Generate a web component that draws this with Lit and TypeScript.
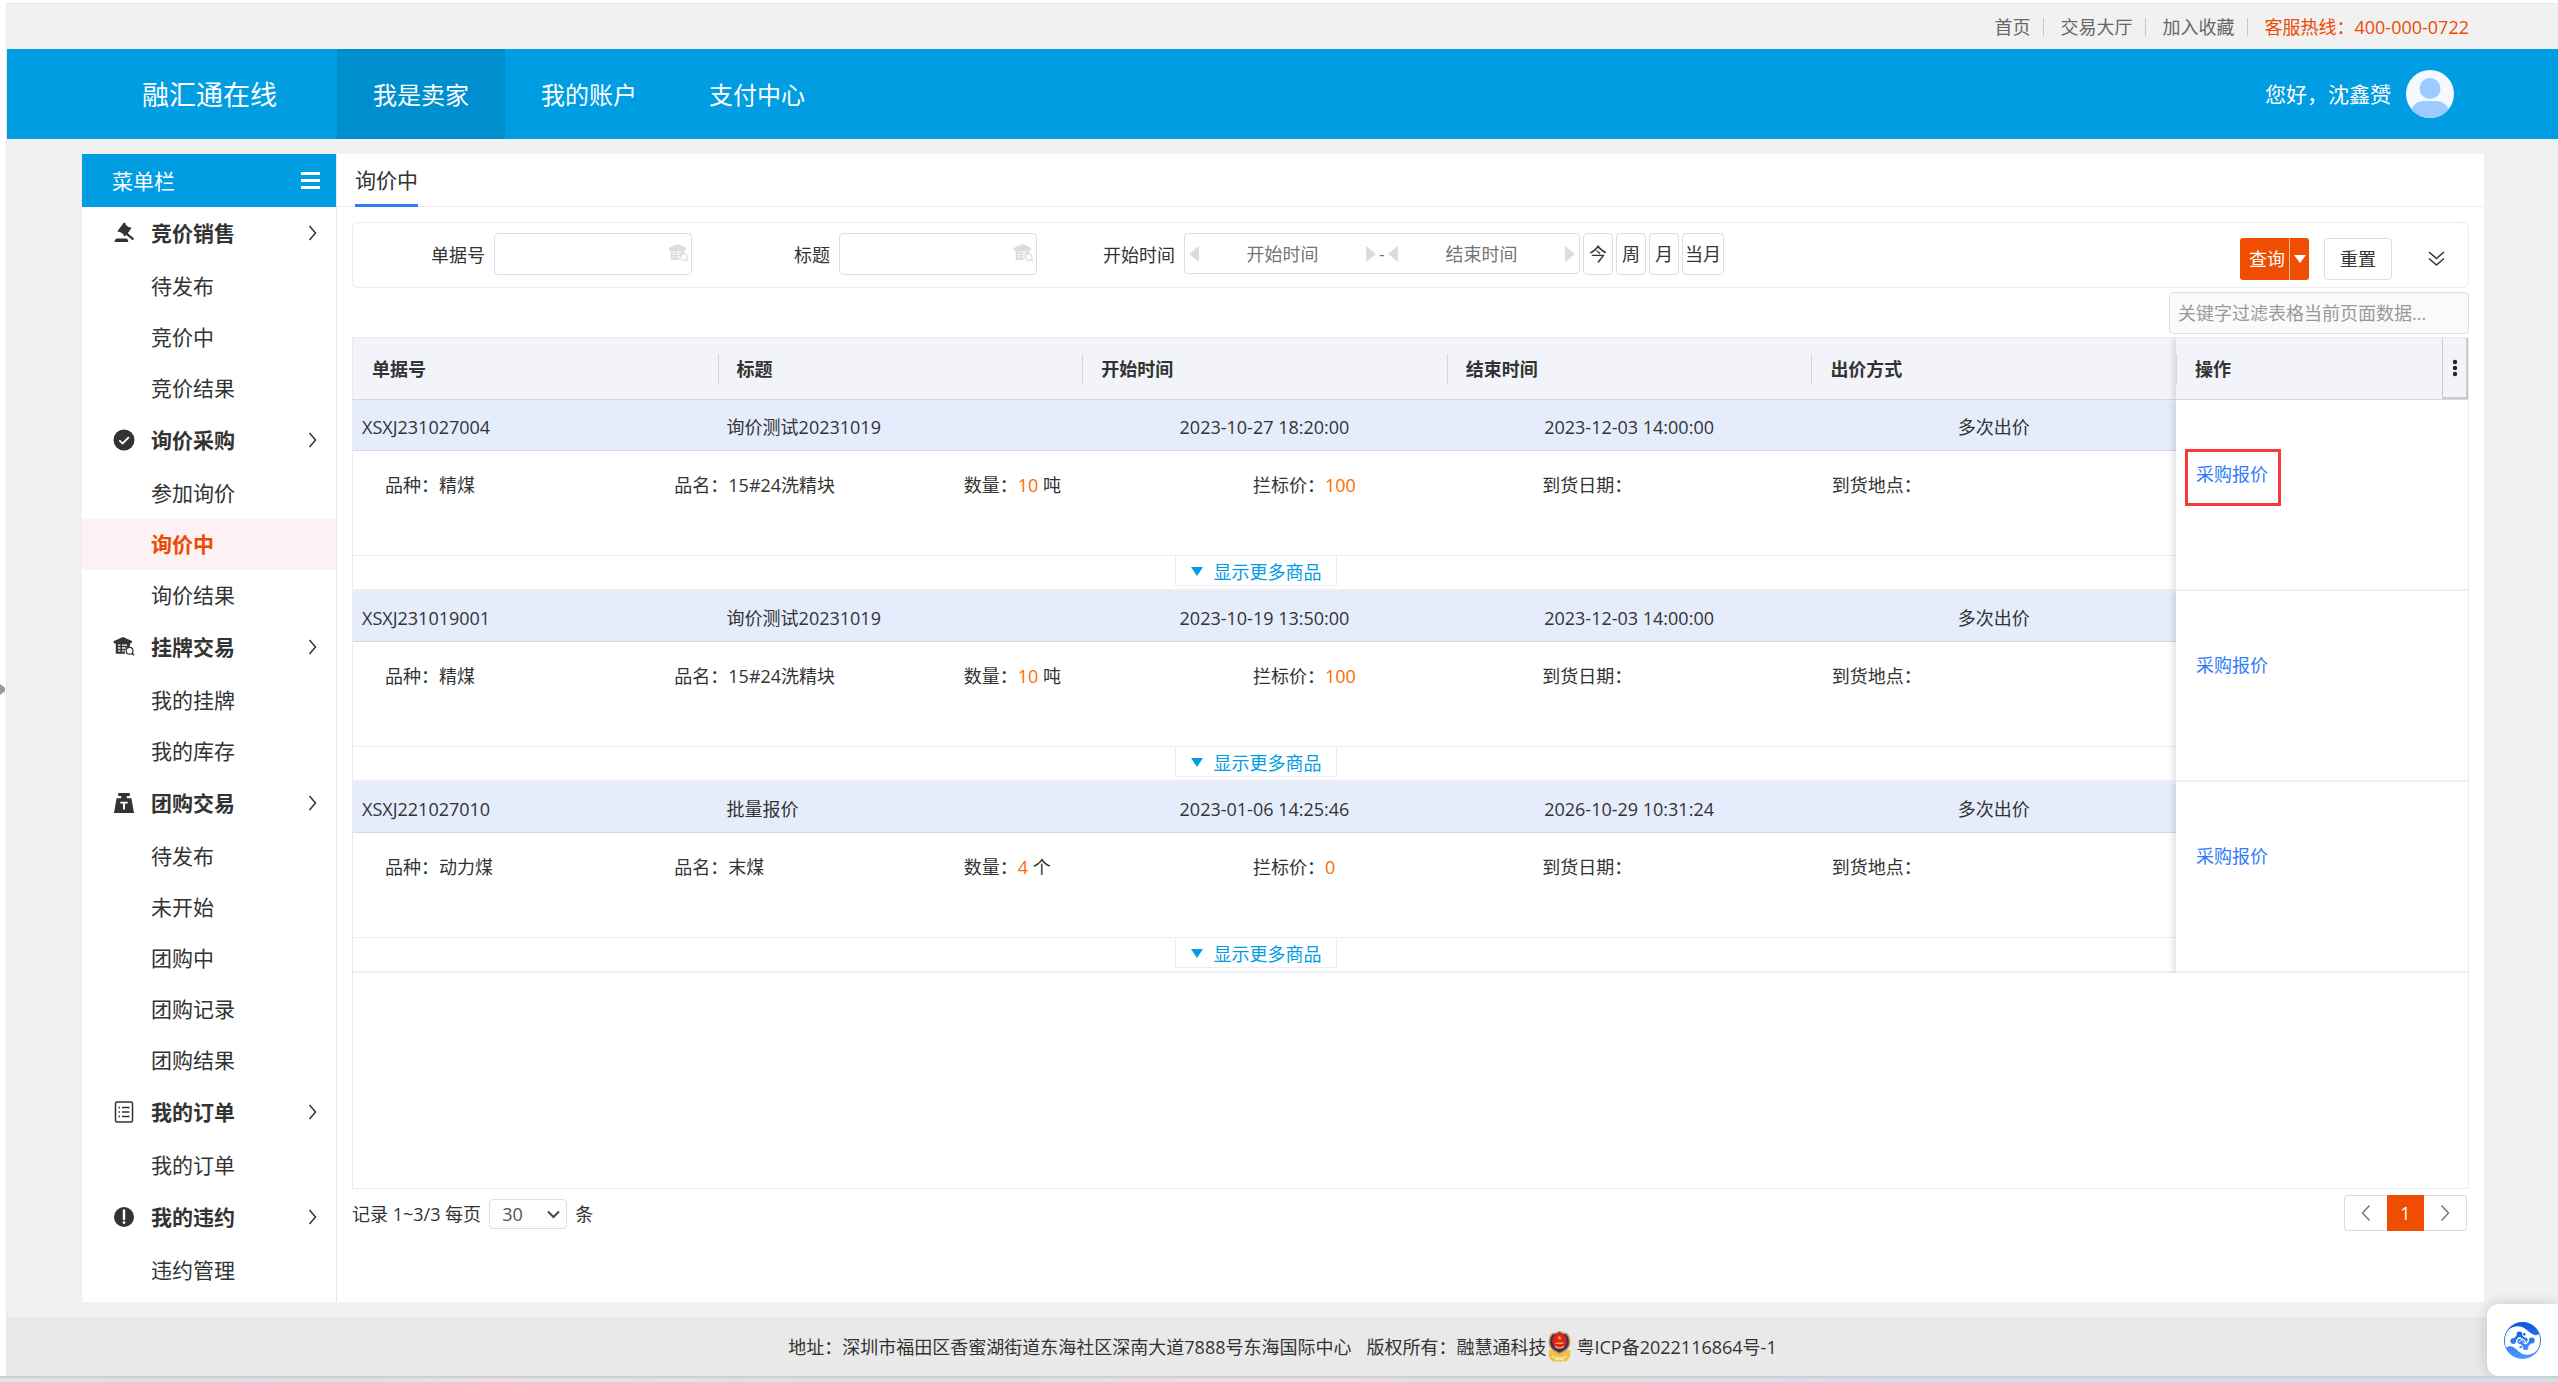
import { LitElement, html, svg, css, TemplateResult } from "lit";
import { customElement, property } from "lit/decorators.js";
import { classMap } from "lit/directives/class-map.js";

interface MenuGroup {
  icon: string;
  name: string;
  items: string[];
}

interface Order {
  no: string;
  title: string;
  start: string;
  end: string;
  mode: string;
  kind: string;
  product: string;
  qty: string;
  unit: string;
  limit: string;
  marked?: boolean;
}

const MENU: MenuGroup[] = [
  { icon: "gavel", name: "竞价销售", items: ["待发布", "竞价中", "竞价结果"] },
  { icon: "check", name: "询价采购", items: ["参加询价", "询价中", "询价结果"] },
  { icon: "house", name: "挂牌交易", items: ["我的挂牌", "我的库存"] },
  { icon: "weight", name: "团购交易", items: ["待发布", "未开始", "团购中", "团购记录", "团购结果"] },
  { icon: "list", name: "我的订单", items: ["我的订单"] },
  { icon: "alert", name: "我的违约", items: ["违约管理"] },
];

const ACTIVE_ITEM = "询价中";

const ORDERS: Order[] = [
  { no: "XSXJ231027004", title: "询价测试20231019", start: "2023-10-27 18:20:00", end: "2023-12-03 14:00:00", mode: "多次出价", kind: "精煤", product: "15#24洗精块", qty: "10", unit: "吨", limit: "100", marked: true },
  { no: "XSXJ231019001", title: "询价测试20231019", start: "2023-10-19 13:50:00", end: "2023-12-03 14:00:00", mode: "多次出价", kind: "精煤", product: "15#24洗精块", qty: "10", unit: "吨", limit: "100" },
  { no: "XSXJ221027010", title: "批量报价", start: "2023-01-06 14:25:46", end: "2026-10-29 10:31:24", mode: "多次出价", kind: "动力煤", product: "末煤", qty: "4", unit: "个", limit: "0" },
];

const ICONS: Record<string, TemplateResult> = {
  gavel: svg`<g fill="currentColor"><path d="m11 .5 2 1.200-.3 1.300 3.600 2.400 1.100-.4 1 1-3.600 5.300 5.700 4.700c1 1-.3 2.500-1.500 1.700l-5.600-4.600-1.700 1.100-1.200-.6.2-1.200-4-2.600-1.200.3-1-1z"/><path d="M4 16.400h9c1.300 0 2.200 1.300 2.300 3.600H1.500c.2-2.300 1.200-3.600 2.500-3.600z"/></g>`,
  check: svg`<circle cx="11" cy="11" r="10.500" fill="currentColor"/><path d="m6.300 11.300 3.300 3.200 6.300-6.300" fill="none" stroke="#fff" stroke-width="1.800"/>`,
  house: svg`<path d="M10 1 19.500 5.200 18 7.500H17v3.300a5 5 0 0 0-4.800 7H2.800V7.500H1L.5 5.200z" fill="currentColor"/><path d="M5 9.200h2.400M9 9.200h5M5 12h2.400M9 12h3.500M5 14.800h2.400M9 14.800h2.500" stroke="#fff" stroke-width="1.300"/><circle cx="16.600" cy="14.800" r="3.400" fill="none" stroke="currentColor" stroke-width="1.200"/><path d="m19 17.200 2 2" stroke="currentColor" stroke-width="1.600"/>`,
  weight: svg`<path d="M5.200 1h11.600v3h-3v2.200h4.600L21 21H1L3.600 6.200h4.600V4h-3z" fill="currentColor"/><path d="M7.300 10.600h7.400M11 10.600v7" stroke="#fff" stroke-width="1.900" fill="none"/>`,
  list: svg`<rect x="2.500" y="1" width="17" height="20" rx="1.500" fill="none" stroke="currentColor" stroke-width="1.500"/><path d="M5.500 6.500H7m2 0h7.500M5.500 11H7m2 0h7.500M5.500 15.500H7m2 0h7.500" stroke="currentColor" stroke-width="1.400"/>`,
  alert: svg`<circle cx="11" cy="11" r="10" fill="currentColor"/><path d="M11 4.500v8.500" stroke="#fff" stroke-width="2.400" stroke-linecap="round"/><circle cx="11" cy="16.600" r="1.400" fill="#fff"/>`,
};

const icon = (name: string, cls: string) =>
  html`<svg class=${cls} viewBox="0 0 22 22" aria-hidden="true">${ICONS[name]}</svg>`;

const base = css`
  *, *::before, *::after { box-sizing: border-box; }
  button, input, select { font: inherit; color: inherit; margin: 0; }
  button { cursor: pointer; }
  a { text-decoration: none; color: inherit; }
  svg { display: block; flex: none; }
`;

@customElement("side-menu")
export class SideMenu extends LitElement {
  @property() active = ACTIVE_ITEM;

  static styles = [base, css`
    :host { display: block; width: 255px; flex: none; background: #fff; border-right: 1px solid #e6e6ea; padding-bottom: 6px; }
    .head { display: flex; align-items: center; justify-content: space-between; height: 53px; padding: 0 16px 0 30px; background: #009de2; color: #fff; font-size: 21px; }
    .burger { display: grid; gap: 4px; padding: 0; border: 0; background: none; }
    .burger i { display: block; width: 19px; height: 3px; background: #fff; }
    .group { display: flex; align-items: center; width: 100%; height: 54px; padding: 0 18px 2px 31px; border: 0; background: none; font-size: 21px; font-weight: 700; text-align: left; }
    .name { flex: 1; }
    .ico { width: 22px; height: 22px; margin-right: 16px; }
    .arrow { width: 10px; height: 16px; }
    .item { display: flex; align-items: center; height: 51px; padding: 0 0 2px 69px; font-size: 21px; }
    .active { background: #fdf1f3; color: #ec4b03; font-weight: 700; }
  `];

  render() {
    return html`
      <div class="head">
        <span>菜单栏</span>
        <button class="burger" aria-label="折叠菜单"><i></i><i></i><i></i></button>
      </div>
      <nav>
        ${MENU.map((g) => html`
          <button class="group">
            ${icon(g.icon, "ico")}
            <span class="name">${g.name}</span>
            <svg class="arrow" viewBox="0 0 10 16"><path d="m1.500 1 6 7-6 7" fill="none" stroke="#333" stroke-width="1.500"/></svg>
          </button>
          ${g.items.map((i) => html`<a href="#" class=${classMap({ item: true, active: i === this.active })}>${i}</a>`)}
        `)}
      </nav>
    `;
  }
}

@customElement("query-bar")
export class QueryBar extends LitElement {
  static styles = [base, css`
    :host { display: block; font-size: 18px; }
    .bar { display: flex; align-items: flex-start; height: 66px; padding: 10px 23px 0 0; border: 1px solid #ececf0; border-radius: 6px; }
    .lab { width: 147px; padding-right: 9px; line-height: 44px; text-align: right; }
    .lab:first-child { width: 141px; }
    .field { position: relative; width: 198px; }
    .box { width: 100%; height: 42px; padding: 0 30px 0 8px; border: 1px solid #d9dde6; border-radius: 4px; background: #fff; }
    .pick { position: absolute; top: 10px; right: 3px; width: 21px; height: 21px; color: #dcdcdc; }
    .range { display: flex; align-items: center; width: 396px; height: 41px; padding: 0 4px; border: 1px solid #d9dde6; border-radius: 4px; color: #757575; }
    .date { flex: 1; min-width: 0; width: 0; height: 36px; padding: 0; border: 0; background: none; text-align: center; }
    .date::placeholder { color: #757575; opacity: 1; }
    .tri { width: 10px; height: 16px; fill: #dcdcdc; }
    .dash { width: 12px; text-align: center; }
    .quick { height: 42px; margin-left: 3px; padding: 0 5px; border: 1px solid #d9dde6; border-radius: 4px; background: #fff; }
    .quick:nth-last-child(2) { padding: 0 2px; }
    .acts { display: flex; align-items: center; margin: 5px 0 0 auto; }
    .go { height: 42px; padding: 0 4px 0 9px; border: 0; border-radius: 3px 0 0 3px; background: #ee4d02; color: #fff; }
    .drop { display: grid; place-items: center; width: 20px; height: 42px; padding: 0; border: 0; border-left: 1px solid #f8b795; border-radius: 0 3px 3px 0; background: #ee4d02; }
    .down { width: 12px; height: 8px; fill: #fff; }
    .reset { height: 42px; margin-left: 15px; padding: 0 15px; border: 1px solid #d9dde6; border-radius: 4px; background: #fff; }
    .more { margin-left: 36px; padding: 0; border: 0; background: none; }
    .chev { width: 17px; height: 16px; }
  `];

  render() {
    const left = html`<svg class="tri" viewBox="0 0 10 16"><path d="M10 0v16L0 8z"/></svg>`;
    const right = html`<svg class="tri" viewBox="0 0 10 16"><path d="M0 0v16l10-8z"/></svg>`;
    return html`
      <form class="bar">
        <label class="lab" for="no">单据号</label>
        <div class="field"><input class="box" id="no">${icon("house", "pick")}</div>
        <label class="lab" for="title">标题</label>
        <div class="field"><input class="box" id="title">${icon("house", "pick")}</div>
        <label class="lab" for="from">开始时间</label>
        <div class="range">
          ${left}<input class="date" id="from" placeholder="开始时间">${right}
          <span class="dash">-</span>
          ${left}<input class="date" aria-label="结束时间" placeholder="结束时间">${right}
        </div>
        ${["今", "周", "月", "当月"].map((t) => html`<button type="button" class="quick">${t}</button>`)}
        <div class="acts">
          <button type="button" class="go">查询</button>
          <button type="button" class="drop" aria-label="更多查询"><svg class="down" viewBox="0 0 12 8"><path d="M0 0h12L6 8z"/></svg></button>
          <button type="button" class="reset">重置</button>
          <button type="button" class="more" aria-label="展开"><svg class="chev" viewBox="0 0 17 16"><path d="m1 1 7.500 6.500L16 1M1 7.500 8.500 14 16 7.500" fill="none" stroke="#333" stroke-width="1.500"/></svg></button>
        </div>
      </form>
    `;
  }
}

@customElement("order-table")
export class OrderTable extends LitElement {
  @property({ attribute: false }) orders: Order[] = ORDERS;

  static styles = [base, css`
    :host { display: block; border: 1px solid #ebebef; font-size: 18px; }
    table { width: 100%; table-layout: fixed; border-collapse: separate; border-spacing: 0; }
    .op { width: 292px; }
    th { height: 62px; padding: 0; border-bottom: 1px solid #d6d9e2; background: #f2f4f9; text-align: left; font-weight: 700; }
    .hd { display: flex; align-items: center; height: 30px; padding-left: 18px; border-left: 1px solid #d3d5db; }
    .hd.first { border-left-color: transparent; }
    .ophead { position: relative; box-shadow: -3px 0 6px rgba(0, 0, 0, .12); clip-path: inset(0 0 0 -10px); }
    .kebab { position: absolute; top: 0; right: 0; display: grid; place-items: center; width: 26px; height: 61px; padding: 0; border: 1px solid #c9cbd1; border-width: 0 2px 2px 1px; background: #f2f4f9; }
    .dots { width: 6px; height: 18px; fill: #222; }
    .band td { height: 51px; padding: 4px 9px 0; background: #e5edfc; border-bottom: 1px solid #d6d9e2; }
    .band .mid { text-align: center; }
    .band .act { position: relative; padding: 62px 20px 0; background: #fff; vertical-align: top; border-bottom: 2px solid #f0f1f6; box-shadow: -3px 0 6px rgba(0, 0, 0, .12); clip-path: inset(0 0 0 -10px); }
    .link { color: #2f7cf6; }
    .mark { position: absolute; top: 49px; left: 9px; width: 96px; height: 57px; border: 3px solid #fb3838; pointer-events: none; }
    .detail { height: 104px; padding: 22px 0 0 32px; vertical-align: top; }
    .specs { display: grid; grid-template-columns: repeat(6, 1fr); margin-right: 55px; }
    .hot { color: #ff6a00; }
    .foot { height: 36px; padding: 0 18px 0 0; border-top: 1px solid #ededf3; border-bottom: 2px solid #ededf3; vertical-align: top; }
    .more { display: flex; align-items: center; gap: 11px; width: 162px; height: 30px; margin: 0 auto; padding: 2px 0 0 15px; border: 1px solid #ededf3; border-top: 0; background: #fff; color: #009de2; }
    .down { width: 12px; height: 9px; fill: #009de2; }
  `];

  render() {
    return html`
      <table>
        <colgroup><col><col><col><col><col><col class="op"></colgroup>
        <thead>
          <tr>
            ${["单据号", "标题", "开始时间", "结束时间", "出价方式"].map((t, i) => html`<th><div class=${classMap({ hd: true, first: i === 0 })}>${t}</div></th>`)}
            <th class="ophead">
              <div class="hd">操作</div>
              <button class="kebab" aria-label="列设置"><svg class="dots" viewBox="0 0 6 18"><circle cx="3" cy="3" r="2.200"/><circle cx="3" cy="9" r="2.200"/><circle cx="3" cy="15" r="2.200"/></svg></button>
            </th>
          </tr>
        </thead>
        <tbody>
          ${this.orders.map((o) => html`
            <tr class="band">
              <td>${o.no}</td>
              <td>${o.title}</td>
              <td class="mid">${o.start}</td>
              <td class="mid">${o.end}</td>
              <td class="mid">${o.mode}</td>
              <td class="act" rowspan="3">
                <a class="link" href="#">采购报价</a>
                ${o.marked ? html`<span class="mark"></span>` : ""}
              </td>
            </tr>
            <tr>
              <td class="detail" colspan="5">
                <div class="specs">
                  <span>品种：${o.kind}</span>
                  <span>品名：${o.product}</span>
                  <span>数量：<span class="hot">${o.qty}</span> ${o.unit}</span>
                  <span>拦标价：<span class="hot">${o.limit}</span></span>
                  <span>到货日期：</span>
                  <span>到货地点：</span>
                </div>
              </td>
            </tr>
            <tr>
              <td class="foot" colspan="5">
                <button class="more"><svg class="down" viewBox="0 0 12 9"><path d="M0 0h12L6 9z"/></svg>显示更多商品</button>
              </td>
            </tr>
          `)}
        </tbody>
      </table>
    `;
  }
}

@customElement("app-root")
export class AppRoot extends LitElement {
  static styles = [base, css`
    :host { position: relative; display: flex; flex-direction: column; min-height: 100vh; background: #fff; color: #333; font: 18px/24px "Open Sans", "Noto Sans CJK SC", sans-serif; }
    .page { flex: 1; display: flex; flex-direction: column; margin: 3px 0 0 6px; border: 1px solid #e6e6e6; border-width: 1px 0 0 1px; background: #f1f1f1; }
    .top { display: flex; justify-content: flex-end; align-items: center; height: 45px; padding-right: 89px; color: #666; }
    .top a + a { margin-left: 13px; padding-left: 17px; position: relative; }
    .top a + a::before { content: ""; position: absolute; left: 0; top: 3px; width: 1px; height: 18px; background: #c4c6cc; }
    .top .hotline { color: #ec4b03; }
    .bar { display: flex; height: 90px; padding-right: 104px; background: #009de2; color: #fff; }
    .brand { display: flex; align-items: center; width: 330px; padding: 2px 0 0 135px; font-size: 27px; }
    .nav { display: flex; flex: 1; }
    .nav a { display: flex; align-items: center; padding: 2px 36px 0; font-size: 24px; }
    .nav .on { background: #008fce; }
    .user { display: flex; align-items: center; gap: 15px; font-size: 21px; }
    .avatar { width: 48px; height: 48px; }
    .body { flex: 1; display: flex; margin: 15px 74px 15px 75px; }
    .main { flex: 1; min-width: 0; display: flex; flex-direction: column; background: #fff; }
    .tabs { height: 53px; padding: 0 18px; border-bottom: 1px solid #ececf0; font-size: 21px; }
    .tab { display: inline-block; height: 53px; padding-top: 14px; border-bottom: 3px solid #2f7af6; }
    .inner { flex: 1; display: flex; flex-direction: column; padding: 15px 15px 0; }
    .filter { align-self: flex-end; width: 300px; height: 42px; margin: 4px 0 3px; padding: 0 8px; border: 1px solid #d9dde6; border-radius: 4px; background: #fafafa; }
    .filter::placeholder { color: #999; opacity: 1; }
    .table { flex: 1; }
    .pager { display: flex; justify-content: space-between; align-items: flex-start; height: 113px; padding: 6px 2px 0 0; }
    .size { display: flex; align-items: center; gap: 8px; height: 38px; }
    .sel { position: relative; width: 78px; }
    .sel select { display: block; width: 100%; height: 30px; padding: 0 0 0 12px; border: 1px solid #d9dde6; border-radius: 4px; background: #fff; color: #555; appearance: none; }
    .sel svg { position: absolute; right: 7px; top: 11px; width: 13px; height: 9px; pointer-events: none; }
    .pages { display: flex; }
    .pages button { display: grid; place-items: center; width: 43px; height: 36px; padding: 0; border: 1px solid #dcdcdc; background: #fff; }
    .pages .prev { border-right: 0; border-radius: 4px 0 0 4px; }
    .pages .next { border-left: 0; border-radius: 0 4px 4px 0; }
    .pages .cur { width: 37px; border: 0; background: #ee4d02; color: #fff; }
    .pages svg { width: 10px; height: 18px; }
    footer { display: flex; align-items: center; justify-content: center; height: 59px; background: #e9e9e9; }
    .addr { margin-right: 15px; }
    .emblem { width: 27px; height: 31px; margin-right: 3px; }
    .edge { height: 6px; border-top: 2px solid #c9ced4; background: linear-gradient(90deg, #e3e2de, #dadfe9 10%, #e6e1de 19%, #dfe0e4 35%, #eadfe0 51%, #dfe2d6 58%, #dcdde8 65%, #cfe0e8 75%, #cfe0e8); }
    .handle { position: absolute; left: 0; top: 684px; width: 5px; height: 11px; padding: 0; border: 0; background: #999; clip-path: polygon(0 0, 100% 35%, 100% 65%, 0 100%); }
    .assist { position: absolute; right: 0; bottom: 6px; display: grid; place-items: center start; width: 71px; height: 72px; padding: 0 0 0 17px; border: 0; border-radius: 12px 0 0 12px; background: #fff; box-shadow: 0 0 14px rgba(0, 0, 0, .18); clip-path: inset(-20px 0 0 -20px); }
    .assist svg { width: 37px; height: 37px; }
  `];

  render() {
    return html`
      <div class="page">
        <div class="top">
          <a href="#">首页</a><a href="#">交易大厅</a><a href="#">加入收藏</a><a class="hotline" href="#">客服热线：400-000-0722</a>
        </div>
        <header class="bar">
          <div class="brand">融汇通在线</div>
          <nav class="nav">
            <a class="on" href="#">我是卖家</a><a href="#">我的账户</a><a href="#">支付中心</a>
          </nav>
          <div class="user">
            <span>您好，沈鑫赟</span>
            <svg class="avatar" viewBox="0 0 48 48">
              <defs><clipPath id="c"><circle cx="24" cy="24" r="24"/></clipPath></defs>
              <circle cx="24" cy="24" r="24" fill="#f4f9ff"/>
              <g fill="#9dcbff" clip-path="url(#c)"><circle cx="24" cy="18.500" r="10.500"/><path d="M4 48V42C7 34 12 31 18 31h12c6 0 11 3 14 11v6z"/></g>
            </svg>
          </div>
        </header>
        <div class="body">
          <side-menu></side-menu>
          <main class="main">
            <div class="tabs"><a class="tab" href="#">询价中</a></div>
            <div class="inner">
              <query-bar></query-bar>
              <input class="filter" aria-label="关键字过滤" placeholder="关键字过滤表格当前页面数据...">
              <order-table class="table"></order-table>
              <div class="pager">
                <div class="size">
                  <label for="size">记录 1~3/3 每页</label>
                  <span class="sel">
                    <select id="size"><option>30</option></select>
                    <svg viewBox="0 0 13 9"><path d="m1 1.500 5.500 5.500L12 1.500" fill="none" stroke="#444" stroke-width="2"/></svg>
                  </span>
                  <span>条</span>
                </div>
                <div class="pages">
                  <button class="prev" aria-label="上一页"><svg viewBox="0 0 10 18"><path d="M8.500 1.500 1.500 9l7 7.500" fill="none" stroke="#777" stroke-width="1.500"/></svg></button>
                  <button class="cur">1</button>
                  <button class="next" aria-label="下一页"><svg viewBox="0 0 10 18"><path d="m1.500 1.500 7 7.500-7 7.500" fill="none" stroke="#777" stroke-width="1.500"/></svg></button>
                </div>
              </div>
            </div>
          </main>
        </div>
        <footer>
          <span class="addr">地址：深圳市福田区香蜜湖街道东海社区深南大道7888号东海国际中心</span>
          <span>版权所有：融慧通科技</span>
          <svg class="emblem" viewBox="0 0 27 31">
            <path d="M3 19c-1 5 0 9 4 11.500h13c4-2.500 5-6.500 4-11.500z" fill="#f0bf4d"/>
            <path d="M6 25c4 3 11 3 15 0M9 29c3-1.500 6-1.500 9 0" fill="none" stroke="#fbe7a6" stroke-width="1.500"/>
            <path d="M13.500.5c2 1.500 4 2.200 7 2.200C24 6 24 9 23.500 13c-.5 4-4 7-10 9.500C7.500 20 4 17 3.500 13 3 9 3 6 6.500 2.700c3 0 5-.7 7-2.200z" fill="#3b2f63" stroke="#c99a4a" stroke-width="1.500"/>
            <ellipse cx="13.500" cy="10" rx="7.200" ry="7.800" fill="#e2231a"/>
            <path d="m13.500 4.500.7 1.500 1.600.2-1.200 1.100.3 1.600-1.400-.8-1.400.8.3-1.600-1.200-1.100 1.600-.2zM9.500 11.500h8v1.500h-8z" fill="#f8a04a"/>
            <path d="M9 15.500c3 2 6 2 9 0" stroke="#f8d04a" stroke-width="1.200" fill="none"/>
          </svg>
          <a href="#">粤ICP备2022116864号-1</a>
        </footer>
      </div>
      <div class="edge"></div>
      <button class="handle" aria-label="展开侧栏"></button>
      <button class="assist" aria-label="智能助手">
        <svg viewBox="0 0 36 36">
          <defs><linearGradient id="g" x1="0" y1="0" x2="0" y2="1"><stop offset="0" stop-color="#0a55dc"/><stop offset="1" stop-color="#4f9bff"/></linearGradient>
          <linearGradient id="h" gradientUnits="userSpaceOnUse" x1="0" y1="9" x2="0" y2="27"><stop offset="0" stop-color="#0f5ce0"/><stop offset="1" stop-color="#4a95fb"/></linearGradient></defs>
          <circle cx="18" cy="18" r="18" fill="url(#g)"/>
          <path d="M1 18C1 9 6.500 4.200 13.500 4.200c7.500 0 10 6.300 15.500 8.300 2 .7 3.800.2 5.200-.8.500 2 .8 4 .8 6.300 0 9-5.500 13.800-12.500 13.800C15 31.800 12.500 25.500 7.500 23.800c-2-.7-4 0-5.500 1C1.300 22.500 1 20.300 1 18z" fill="#fff"/>
          <g fill="url(#h)" stroke="url(#h)" stroke-linecap="round">
            <circle cx="15" cy="12" r="2.300"/><circle cx="9" cy="18.500" r="2.300"/><circle cx="20.500" cy="17.500" r="2"/>
            <path d="M9 18.500 15 12l5.500 5.500" fill="none" stroke-width="2.600"/>
            <circle cx="27" cy="18" r="2.300"/><circle cx="21" cy="24.500" r="2.300"/><circle cx="15.500" cy="18.800" r="2"/>
            <path d="M27 18l-6 6.500-5.500-5.500" fill="none" stroke-width="2.600"/>
            <circle cx="19.800" cy="12" r=".8"/><circle cx="16.200" cy="24.300" r=".8"/>
          </g>
          <path d="m14.500 19.500 3.500-3 3.500 3" fill="none" stroke="#fff" stroke-width="1"/>
        </svg>
      </button>
    `;
  }
}
